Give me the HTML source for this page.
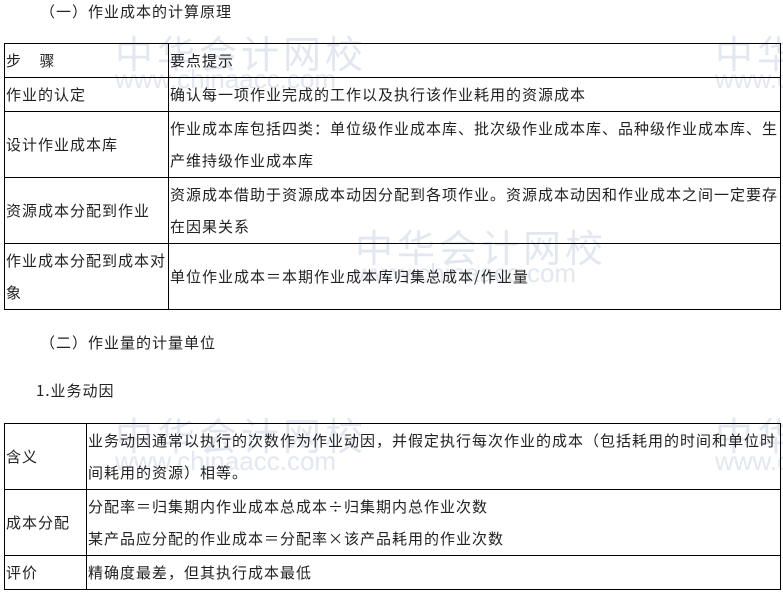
<!DOCTYPE html>
<html><head><meta charset="utf-8"><style>
body{margin:0;width:783px;height:593px;background:#fff;position:relative;overflow:hidden;font-family:"Noto Sans CJK SC","Liberation Sans",sans-serif;font-size:15px;letter-spacing:1px;color:#222}
.t{position:absolute;white-space:nowrap}
table{position:absolute;border-collapse:collapse;left:4px;width:777px;table-layout:fixed}
td{border:1px solid #000;padding:0 1px;line-height:32px;vertical-align:middle;font-size:15px;overflow:hidden}
.wm{position:absolute;color:#e2e7f0;white-space:nowrap;z-index:0;letter-spacing:0}
table{z-index:1}
</style></head><body>
<div class="wm" style="left:115px;top:24px;font-size:38px;letter-spacing:4px">中华会计网校</div>
<div class="wm" style="left:115px;top:64px;font-size:26px;font-family:'Liberation Sans'">www.chinaacc.com</div>
<div class="wm" style="left:715px;top:24px;font-size:38px;letter-spacing:4px">中华</div>
<div class="wm" style="left:715px;top:64px;font-size:26px;font-family:'Liberation Sans'">www.c</div>
<div class="wm" style="left:355px;top:218px;font-size:38px;letter-spacing:4px">中华会计网校</div>
<div class="wm" style="left:355px;top:258px;font-size:26px;font-family:'Liberation Sans'">www.chinaacc.com</div>
<div class="wm" style="left:115px;top:406px;font-size:38px;letter-spacing:4px">中华会计网校</div>
<div class="wm" style="left:115px;top:446px;font-size:26px;font-family:'Liberation Sans'">www.chinaacc.com</div>
<div class="wm" style="left:715px;top:406px;font-size:38px;letter-spacing:4px">中华</div>
<div class="wm" style="left:715px;top:446px;font-size:26px;font-family:'Liberation Sans'">www.c</div>
<div class="t" style="left:40px;top:1px">（一）作业成本的计算原理</div>
<table style="top:43px">
<col style="width:164px"><col>
<tr style="height:34px"><td>步&nbsp;&nbsp;&nbsp;&nbsp;骤</td><td>要点提示</td></tr>
<tr style="height:34px"><td>作业的认定</td><td>确认每一项作业完成的工作以及执行该作业耗用的资源成本</td></tr>
<tr style="height:66px"><td>设计作业成本库</td><td>作业成本库包括四类：单位级作业成本库、批次级作业成本库、品种级作业成本库、生产维持级作业成本库</td></tr>
<tr style="height:66px"><td>资源成本分配到作业</td><td>资源成本借助于资源成本动因分配到各项作业。资源成本动因和作业成本之间一定要存在因果关系</td></tr>
<tr style="height:66px"><td>作业成本分配到成本对象</td><td>单位作业成本＝本期作业成本库归集总成本/作业量</td></tr>
</table>
<div class="t" style="left:40px;top:332px">（二）作业量的计量单位</div>
<div class="t" style="left:36px;top:380px">1.业务动因</div>
<table style="top:423px">
<col style="width:82px"><col>
<tr style="height:66px"><td>含义</td><td>业务动因通常以执行的次数作为作业动因，并假定执行每次作业的成本（包括耗用的时间和单位时间耗用的资源）相等。</td></tr>
<tr style="height:66px"><td>成本分配</td><td>分配率＝归集期内作业成本总成本÷归集期内总作业次数<br>某产品应分配的作业成本＝分配率×该产品耗用的作业次数</td></tr>
<tr style="height:34px"><td>评价</td><td>精确度最差，但其执行成本最低</td></tr>
</table>
</body></html>
